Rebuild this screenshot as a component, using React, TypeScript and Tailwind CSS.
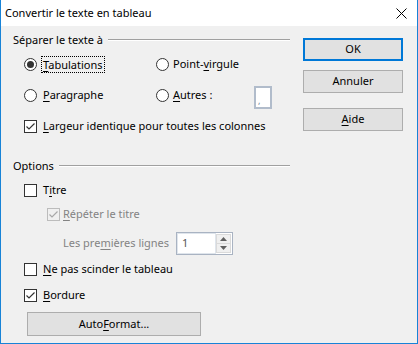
const font = { fontFamily: '"Noto Sans", "Liberation Sans", sans-serif' };

function U({ children }: { children: string }) {
  return <span className="underline underline-offset-2 decoration-1">{children}</span>;
}

function Radio({ checked }: { checked?: boolean }) {
  return (
    <span className="w-[13px] h-[13px] rounded-full border border-[#333] bg-white flex items-center justify-center shrink-0">
      {checked && <span className="w-[7px] h-[7px] rounded-full bg-[#333]" />}
    </span>
  );
}

function Check({ checked, disabled }: { checked?: boolean; disabled?: boolean }) {
  return (
    <span
      className={
        'w-[13px] h-[13px] border flex items-center justify-center shrink-0 ' +
        (disabled ? 'border-[#bcbcbc] bg-[#f0f0f0]' : 'border-[#333] bg-white')
      }
    >
      {checked && (
        <svg width="11" height="11" viewBox="0 0 11 11">
          <polyline
            points="1.5,5.5 4,8 9.5,2.5"
            fill="none"
            stroke={disabled ? '#a8a8a8' : '#333'}
            strokeWidth="1.2"
          />
        </svg>
      )}
    </span>
  );
}

function Group({ label, className = '' }: { label: string; className?: string }) {
  return (
    <div className={'flex items-center ' + className}>
      <span>{label}</span>
      <span className="flex-1 ml-[5px] border-t border-[#a0a0a0] border-b-white border-b" />
    </div>
  );
}

function Button({ children, def, className = '' }: { children: React.ReactNode; def?: boolean; className?: string }) {
  return (
    <div
      className={
        'h-[23px] flex items-center justify-center bg-[#e1e1e1] ' +
        (def ? 'border-2 border-[#0078d7] ' : 'border border-[#adadad] ') +
        className
      }
    >
      {children}
    </div>
  );
}

export default function App() {
  return (
    <div className="w-[418px] h-[344px] flex flex-col border-x border-b border-[#1883d7] text-[11px] text-black bg-white" style={font}>
      <div className="h-[26px] shrink-0 flex items-center pl-[4px] bg-white">
        <span className="flex-1">Convertir le texte en tableau</span>
        <svg width="11" height="11" viewBox="0 0 11 11" className="mr-[10px]">
          <path d="M0.5 0.5 L10.5 10.5 M10.5 0.5 L0.5 10.5" stroke="#000" strokeWidth="1" />
        </svg>
      </div>
      <div className="flex-1 bg-[#f0f0f0] flex">
        <div className="w-[289px] pl-[12px] flex flex-col">
          <Group label="Séparer le texte à" className="h-[28px]" />
          <div className="ml-[11px] flex flex-col">
            <div className="h-[20px] flex items-center">
              <div className="w-[132px] flex items-center">
                <Radio checked />
                <span className="ml-[4px] px-[1px] border border-dotted border-black leading-[15px]">
                  <U>T</U>abulations
                </span>
              </div>
              <Radio />
              <span className="ml-[4px]">
                Point-<U>v</U>irgule
              </span>
            </div>
            <div className="mt-[11px] h-[20px] flex items-center">
              <div className="w-[132px] flex items-center">
                <Radio />
                <span className="ml-[6px]">
                  <U>P</U>aragraphe
                </span>
              </div>
              <Radio />
              <span className="ml-[4px] w-[81px]">
                <U>A</U>utres :
              </span>
              <span className="mt-[5px] w-[18px] h-[23px] border-2 border-[#b1bccb] bg-white flex items-end pl-[2px] text-[9px] leading-[12px] text-[#6a7f9a]">
                ,
              </span>
            </div>
            <div className="mt-[11px] h-[20px] flex items-center">
              <Check checked />
              <span className="ml-[6px]">
                <U>L</U>argeur identique pour toutes les colonnes
              </span>
            </div>
          </div>
          <Group label="Options" className="mt-[20px] h-[20px]" />
          <div className="ml-[11px] flex flex-col">
            <div className="mt-[4px] h-[20px] flex items-center">
              <Check />
              <span className="ml-[6px]">
                T<U>i</U>tre
              </span>
            </div>
            <div className="mt-[4px] h-[20px] flex items-center pl-[23px] text-[#838383]">
              <Check checked disabled />
              <span className="ml-[3px]">
                <U>R</U>épéter le titre
              </span>
            </div>
            <div className="mt-[8px] h-[22px] flex items-center pl-[39px] text-[#838383]">
              <span className="w-[113px]">
                Les pre<U>m</U>ières lignes
              </span>
              <div className="w-[57px] h-[23px] border border-[#a9b3c2] bg-white flex items-center">
                <div className="flex-1 h-full border border-[#dfe5ec] flex items-center pl-[4px] text-[#555]">1</div>
                <div className="w-[16px] h-full flex flex-col justify-center py-[1px] pr-[1px]">
                  <div className="flex-1 bg-[#f0f0f0] border border-[#dadada] flex items-center justify-center">
                    <svg width="7" height="4" viewBox="0 0 7 4">
                      <polygon points="3.5,0 7,4 0,4" fill="#606060" />
                    </svg>
                  </div>
                  <div className="flex-1 bg-[#f0f0f0] border border-[#dadada] border-t-0 flex items-center justify-center">
                    <svg width="7" height="4" viewBox="0 0 7 4">
                      <polygon points="0,0 7,0 3.5,4" fill="#606060" />
                    </svg>
                  </div>
                </div>
              </div>
            </div>
            <div className="mt-[5px] h-[20px] flex items-center">
              <Check />
              <span className="ml-[6px]">
                <U>N</U>e pas scinder le tableau
              </span>
            </div>
            <div className="mt-[6px] h-[20px] flex items-center">
              <Check checked />
              <span className="ml-[6px]">
                <U>B</U>ordure
              </span>
            </div>
            <Button className="mt-[7px] ml-[3px] w-[174px] h-[24px]">
              <span>
                Auto<U>F</U>ormat...
              </span>
            </Button>
          </div>
        </div>
        <div className="ml-[13px] w-[100px] pt-[12px] flex flex-col">
          <Button def>OK</Button>
          <Button className="mt-[9px]">Annuler</Button>
          <Button className="mt-[15px]">
            <span>
              <U>A</U>ide
            </span>
          </Button>
        </div>
      </div>
    </div>
  );
}
